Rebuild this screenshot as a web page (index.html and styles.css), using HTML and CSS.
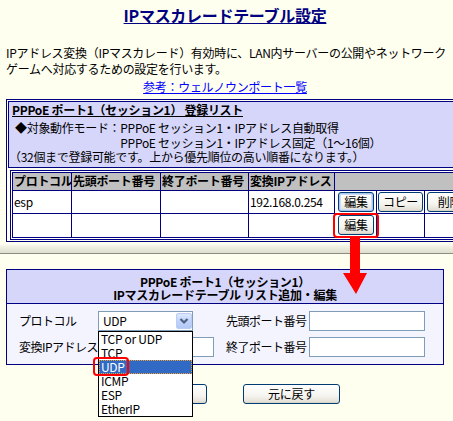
FILE: index.html
```html
<!DOCTYPE html>
<html lang="ja">
<head>
<meta charset="utf-8">
<title>IPマスカレードテーブル設定</title>
<link rel="stylesheet" href="styles.css">
</head>
<body>
<div class="page">
  <h1 class="title"><span>IPマスカレードテーブル設定</span></h1>
  <p class="intro">IPアドレス変換（IPマスカレード）有効時に、LAN内サーバーの公開やネットワーク<br>ゲームへ対応するための設定を行います。</p>
  <p class="ref"><a href="#">参考：ウェルノウンポート一覧</a></p>

  <div class="frame">
    <div class="frame-head">
      <div class="frame-title">PPPoE ポート1（セッション1） 登録リスト</div>
      <div class="mode">
        <span>◆対象動作モード：</span><span>PPPoE セッション1・IPアドレス自動取得</span>
        <span></span><span>PPPoE セッション1・IPアドレス固定（1～16個）</span>
      </div>
      <div class="note">（32個まで登録可能です。上から優先順位の高い順番になります。）</div>
    </div>
    <table class="list">
      <colgroup>
        <col class="c1"><col class="c2"><col class="c3"><col class="c4"><col class="c5"><col class="c6"><col class="c7">
      </colgroup>
      <tr>
        <th>プロトコル</th><th>先頭ポート番号</th><th>終了ポート番号</th><th>変換IPアドレス</th><th colspan="3"></th>
      </tr>
      <tr>
        <td>esp</td><td></td><td></td><td>192.168.0.254</td>
        <td><button class="btn btn-edit is-focus">編集</button></td>
        <td><button class="btn btn-copy">コピー</button></td>
        <td><button class="btn btn-del">削除</button></td>
      </tr>
      <tr>
        <td></td><td></td><td></td><td></td>
        <td><button class="btn btn-edit">編集</button></td>
        <td></td><td></td>
      </tr>
    </table>
  </div>

  <div class="cut"></div>

  <div class="form">
    <div class="form-head">PPPoE ポート1（セッション1）<br>IPマスカレードテーブル リスト追加・編集</div>
    <div class="form-body">
      <span class="label">プロトコル</span>
      <div class="field">
        <div class="select">
          <span class="select-value">UDP</span>
          <span class="select-btn">
            <svg viewBox="0 0 16 16" width="16" height="16"><path d="M4.5 6 L8 9.5 L11.5 6" fill="none" stroke="#4d6185" stroke-width="2.2"/></svg>
          </span>
          <ul class="dd">
            <li>TCP or UDP</li>
            <li>TCP</li>
            <li class="sel">UDP</li>
            <li>ICMP</li>
            <li>ESP</li>
            <li>EtherIP</li>
            <span class="hl-udp"></span>
          </ul>
        </div>
      </div>
      <span class="label">先頭ポート番号</span>
      <span class="input"></span>

      <span class="label">変換IPアドレス</span>
      <div class="field"><span class="input"></span></div>
      <span class="label">終了ポート番号</span>
      <span class="input"></span>
    </div>
  </div>

  <div class="actions">
    <button class="btn btn-wide">設定</button>
    <button class="btn btn-wide">元に戻す</button>
  </div>

  <span class="hl-edit"></span>
  <svg class="arrow" viewBox="0 0 30 60" width="30" height="60">
    <polygon points="10,2 20,2 20,37 27,37 16,58 3,37 10,37" fill="#ff0000"/>
  </svg>
</div>
</body>
</html>
```

FILE: styles.css
```css
html, body {
  margin: 0;
  padding: 0;
  overflow: hidden;
}
body {
  background: #fffff0;
  font-family: "Noto Sans CJK JP", "Noto Sans", sans-serif;
  font-size: 12px;
  letter-spacing: -0.3px;
  color: #000;
  width: 453px;
  height: 421px;
}
.page {
  position: relative;
  width: 438px;
  padding-left: 6px;
}
.title {
  margin: 0;
  padding-top: 5px;
  height: 20px;
  line-height: 20px;
  font-size: 16px;
  font-weight: bold;
  color: #000080;
  text-align: center;
}
.title span {
  text-decoration: underline;
}
.intro {
  margin: 20px 0 0;
  line-height: 16px;
  white-space: nowrap;
}
.ref {
  margin: 2px 0 0;
  line-height: 16px;
  text-align: center;
}
.ref a {
  color: #0000ff;
  text-decoration: underline;
}

/* registered list */
.frame {
  margin-top: 4px;
  width: 479px;
  box-sizing: border-box;
  border: 1px solid #000080;
  padding: 1px;
  background: #fffff0;
}
.frame-head {
  border: 1px solid #000080;
  background: #d6d6fb;
  padding: 0 0 2px 3px;
}
.frame-title {
  line-height: 16px;
  font-weight: bold;
  text-decoration: underline;
}
.mode {
  margin: 3px 0 0 3px;
  display: grid;
  grid-template-columns: auto auto;
  justify-content: start;
  line-height: 14.5px;
}
.note {
  line-height: 14.5px;
  margin-left: -3px;
}
.list {
  margin: 2px 0 0 2px;
  border: 3px double #000080;
  border-collapse: separate;
  border-spacing: 0;
  table-layout: fixed;
  width: 471px;
  background: #fff;
}
.c1 { width: 59px; }
.c2 { width: 89px; }
.c3 { width: 88px; }
.c4 { width: 86px; }
.c5 { width: 42px; }
.c6 { width: 48px; }
.c7 { width: 53px; }
.list th,
.list td {
  box-sizing: border-box;
  padding: 0 0 0 1px;
  border-right: 1px solid #000080;
  border-bottom: 1px solid #000080;
  text-align: left;
  white-space: nowrap;
  overflow: hidden;
  font-size: 12px;
}
.list th:last-child,
.list td:last-child {
  border-right: none;
}
.list tr:last-child td {
  border-bottom: none;
}
.list th {
  background: #c0c0c0;
  height: 18px;
  line-height: 16px;
  font-weight: bold;
}
.list td {
  height: 23px;
  line-height: 16px;
  vertical-align: middle;
}

/* buttons */
.btn {
  font-family: inherit;
  font-size: 12px;
  letter-spacing: -0.3px;
  height: 20px;
  padding: 0;
  border: 1px solid #003c74;
  border-radius: 3px;
  background: linear-gradient(#ffffff, #f5f4ef 60%, #e6e3d9 90%, #d6d0c5);
  color: #000;
  line-height: 18px;
  vertical-align: middle;
  display: inline-block;
}
.btn-edit { width: 36px; margin-left: 2px; }
.btn-copy { width: 45px; }
.btn-del { width: 45px; margin-left: 1px; }
.is-focus {
  box-shadow: inset 0 0 0 1px #a9c4f0, inset 0 0 0 2px #cedcf7;
}
.btn-wide { width: 97px; }

/* separator */
.cut {
  margin: 2px -6px 0;
  height: 8px;
  width: 453px;
  background: linear-gradient(#f6f6ea, #dedece);
  border-bottom: 1px solid #8c8c80;
  border-top: 1px solid #fafaf2;
}

/* edit form */
.form {
  margin-top: 15px;
  width: 438px;
  box-sizing: border-box;
  border: 1px solid #000080;
}
.form-head {
  background: #d6d6fb;
  border-bottom: 1px solid #000080;
  padding: 5px 0 1px;
  text-align: center;
  font-weight: bold;
  line-height: 13.5px;
}
.form-body {
  background: #f4f4ff;
  padding: 7px 0 7px 12px;
  display: grid;
  grid-template-columns: 79px 128px 83px 116px;
  row-gap: 6px;
  align-items: center;
}
.label {
  line-height: 16px;
  white-space: nowrap;
  letter-spacing: -0.5px;
}
.field {
  height: 20px;
}
.input {
  display: block;
  width: 116px;
  height: 20px;
  box-sizing: border-box;
  border: 1px solid #7f9db9;
  background: #fff;
}
.select {
  position: relative;
  width: 95px;
  height: 20px;
  box-sizing: border-box;
  border: 1px solid #7f9db9;
  background: #fff;
  display: flex;
  align-items: center;
  padding-left: 4px;
  z-index: 2;
}
.select-value {
  line-height: 16px;
}
.select-btn {
  margin-left: auto;
  width: 16px;
  height: 16px;
  box-sizing: border-box;
  border: 1px solid #bccdf4;
  border-radius: 2px;
  background: linear-gradient(#dfe8fd, #c1d3fb 50%, #b4c8f6);
  display: flex;
}
.select-btn svg {
  margin: -1px;
}
.dd {
  position: absolute;
  left: -1px;
  top: 19px;
  width: 95px;
  height: 86px;
  box-sizing: border-box;
  margin: 0;
  padding: 0;
  list-style: none;
  border: 1px solid #000;
  background: #fff;
}
.dd li {
  height: 14px;
  line-height: 14px;
  padding-left: 2px;
  white-space: nowrap;
}
.dd li.sel {
  background: #316ac5;
  color: #fff;
  outline: 1px dotted #f0a030;
  outline-offset: -1px;
}
.hl-udp {
  position: absolute;
  left: -6px;
  top: 25px;
  width: 36px;
  height: 19px;
  box-sizing: border-box;
  border: 2px solid #ff0000;
  border-radius: 4px;
}

.actions {
  margin-top: 19px;
  width: 438px;
  display: flex;
  justify-content: center;
  gap: 36px;
}

/* annotations */
.hl-edit {
  position: absolute;
  left: 333px;
  top: 213px;
  width: 46px;
  height: 25px;
  box-sizing: border-box;
  border: 2px solid #ff0000;
  border-radius: 4px;
}
.arrow {
  position: absolute;
  left: 340px;
  top: 236px;
}
```
